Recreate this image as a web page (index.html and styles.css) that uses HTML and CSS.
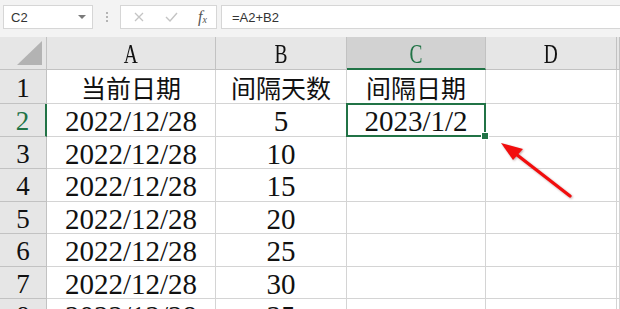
FILE: index.html
```html
<!DOCTYPE html>
<html>
<head>
    <title>Sheet</title>
    <meta charset="utf-8">
    <link rel="stylesheet" href="styles.css">
</head>
<body>
    <div class="toolbar">
        <div class="name-box">
            <span>C2</span>
            <svg class="drop" width="8" height="5" viewBox="0 0 8 5"><path d="M0 0 L8 0 L4 4 Z" fill="#7a7a7a"/></svg>
        </div>
        <div class="grip"><i></i><i></i><i></i></div>
        <div class="fn-box">
            <svg width="10" height="10" viewBox="0 0 10 10"><path d="M1 1 L9 9 M9 1 L1 9" stroke="#c4c4c4" stroke-width="1.3"/></svg>
            <svg width="13" height="10" viewBox="0 0 13 10"><path d="M1 5 L5 9 L12 1" stroke="#c4c4c4" stroke-width="1.4" fill="none"/></svg>
            <span class="fx">f<sub>x</sub></span>
        </div>
        <div class="formula">=A2+B2</div>
    </div>

    <div class="sheet">
        <div class="hd corner"><span class="tri"></span></div>
        <div class="hd"><b>A</b></div>
        <div class="hd"><b>B</b></div>
        <div class="hd active-col"><b>C</b></div>
        <div class="hd"><b>D</b></div>
        <div class="hd"></div>

        <div class="hd rn">1</div>
        <div class="cell cjk">当前日期</div>
        <div class="cell cjk">间隔天数</div>
        <div class="cell cjk">间隔日期</div>
        <div class="cell"></div>
        <div class="cell"></div>

        <div class="hd rn active-row">2</div>
        <div class="cell">2022/12/28</div>
        <div class="cell">5</div>
        <div class="cell selected">2023/1/2</div>
        <div class="cell"></div>
        <div class="cell"></div>

        <div class="hd rn">3</div>
        <div class="cell">2022/12/28</div>
        <div class="cell">10</div>
        <div class="cell"></div>
        <div class="cell"></div>
        <div class="cell"></div>

        <div class="hd rn">4</div>
        <div class="cell">2022/12/28</div>
        <div class="cell">15</div>
        <div class="cell"></div>
        <div class="cell"></div>
        <div class="cell"></div>

        <div class="hd rn">5</div>
        <div class="cell">2022/12/28</div>
        <div class="cell">20</div>
        <div class="cell"></div>
        <div class="cell"></div>
        <div class="cell"></div>

        <div class="hd rn">6</div>
        <div class="cell">2022/12/28</div>
        <div class="cell">25</div>
        <div class="cell"></div>
        <div class="cell"></div>
        <div class="cell"></div>

        <div class="hd rn">7</div>
        <div class="cell">2022/12/28</div>
        <div class="cell">30</div>
        <div class="cell"></div>
        <div class="cell"></div>
        <div class="cell"></div>

        <div class="hd rn">8</div>
        <div class="cell">2022/12/28</div>
        <div class="cell">35</div>
        <div class="cell"></div>
        <div class="cell"></div>
        <div class="cell"></div>
    </div>

    <svg class="arrow" width="620" height="309" viewBox="0 0 620 309">
        <line x1="570" y1="196" x2="512" y2="151" stroke="#f20d0d" stroke-width="3.2" stroke-linecap="round"/>
        <path d="M501 143 L523 149 L513 160 Z" fill="#f20d0d"/>
    </svg>
</body>
</html>
```

FILE: styles.css
```css
html, body {
    margin: 0;
    padding: 0;
}
body {
    width: 620px;
    height: 309px;
    overflow: hidden;
    position: relative;
    background: #fff;
    font-family: "Liberation Serif", "Noto Sans CJK SC", serif;
}

/* formula bar */
.toolbar {
    height: 37px;
    box-sizing: border-box;
    padding: 5px 0 0 3px;
    background: #f3f3f3;
    display: flex;
    align-items: flex-start;
    font-family: "Liberation Sans", "Noto Sans CJK SC", sans-serif;
    font-size: 13px;
    color: #333;
}
.name-box, .fn-box, .formula {
    height: 24px;
    box-sizing: border-box;
    background: #fff;
    border: 1px solid #d6d6d6;
    display: flex;
    align-items: center;
}
.name-box {
    width: 90px;
    padding: 0 6px 0 7px;
    justify-content: space-between;
}
.grip {
    width: 27px;
    height: 24px;
    display: flex;
    flex-direction: column;
    align-items: center;
    justify-content: center;
    gap: 2px;
}
.grip i {
    width: 2px;
    height: 2px;
    background: #b4b4b4;
}
.fn-box {
    width: 97px;
    padding: 0 9px 0 13px;
    justify-content: space-between;
}
.fx {
    font-family: "Liberation Serif", serif;
    font-style: italic;
    font-size: 16px;
    color: #555;
    line-height: 1;
}
.fx sub {
    font-size: 10px;
    vertical-align: -1px;
}
.formula {
    flex: 1;
    margin-left: 4px;
    padding-left: 10px;
    border-right: none;
}

/* grid */
.sheet {
    display: grid;
    grid-template-columns: 47px 169px 131px 139px 131px 1fr;
    grid-template-rows: 33px 34px 33px 32px 33px 32px 33px 32px 33px;
}
.hd, .cell {
    box-sizing: border-box;
    display: flex;
    align-items: center;
    justify-content: center;
    border-right: 1px solid #d4d4d4;
    border-bottom: 1px solid #d4d4d4;
    font-size: 29px;
    color: #111;
    padding-top: 3px;
}
.hd {
    background: #e6e6e6;
    border-color: #c2c2c2;
}
.hd b {
    font-weight: normal;
    font-size: 27px;
    display: inline-block;
    transform: scaleX(0.72);
}
.hd.rn {
    font-size: 27px;
    background: #e6e6e6;
}
.corner {
    position: relative;
}
.tri {
    position: absolute;
    right: 4px;
    bottom: 4px;
    width: 0;
    height: 0;
    border-left: 25px solid transparent;
    border-bottom: 24px solid #b3b3b3;
}
.active-col {
    background: #d2d2d2;
    color: #217346;
    border-bottom: 2px solid #217346;
}
.active-row {
    background: #d2d2d2;
    color: #217346;
    border-right: 2px solid #217346;
}
.cjk {
    font-family: "Noto Sans CJK SC", sans-serif;
    font-size: 25px;
    padding-top: 0;
}
.selected {
    position: relative;
}
.selected::after {
    content: "";
    position: absolute;
    left: -1px;
    top: -1px;
    right: -1px;
    bottom: -1px;
    border: 2px solid #217346;
}
.selected::before {
    content: "";
    position: absolute;
    right: -4px;
    bottom: -4px;
    width: 6px;
    height: 6px;
    background: #217346;
    border: 1px solid #fff;
    z-index: 2;
}

.arrow {
    position: absolute;
    left: 0;
    top: 0;
    pointer-events: none;
    filter: drop-shadow(1px 1px 1px rgba(80, 0, 0, 0.35));
}
```
